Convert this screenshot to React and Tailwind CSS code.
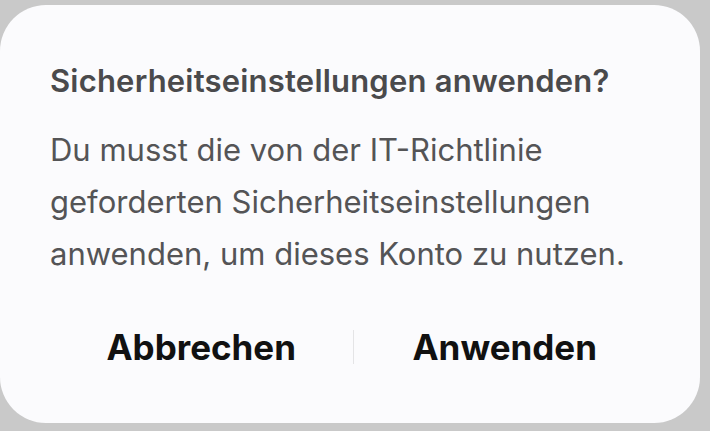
import React from 'react';

export default function App() {
  return (
    <div className="w-[710px] h-[431px] bg-[#c9c9c9] pt-[5px] pr-[10px] overflow-hidden" style={{ fontFamily: 'Inter, "Noto Sans", sans-serif' }}>
      <div className="w-[700px] h-[418px] bg-[#fbfbfd] rounded-[46px] flex flex-col pl-[50px] pr-[44px] pt-[56px]">
        <h1 className="text-[31px] leading-[40px] font-semibold text-[#4a4a4c] tracking-[0.2px] whitespace-nowrap">
          Sicherheitseinstellungen anwenden?
        </h1>
        <p className="mt-[23px] text-[31px] leading-[52px] text-[#545456] whitespace-nowrap">
          <span className="block">Du musst die von der IT-Richtlinie</span>
          <span className="block">geforderten Sicherheitseinstellungen</span>
          <span className="block">anwenden, um dieses Konto zu nutzen.</span>
        </p>
        <div className="mt-[47px] flex items-center">
          <button className="flex-1 text-[35px] font-bold text-[#111] leading-[40px]">Abbrechen</button>
          <div className="w-px h-[34px] bg-[#e4e4e6]" />
          <button className="flex-1 text-[35px] font-bold text-[#111] leading-[40px]">Anwenden</button>
        </div>
      </div>
    </div>
  );
}
